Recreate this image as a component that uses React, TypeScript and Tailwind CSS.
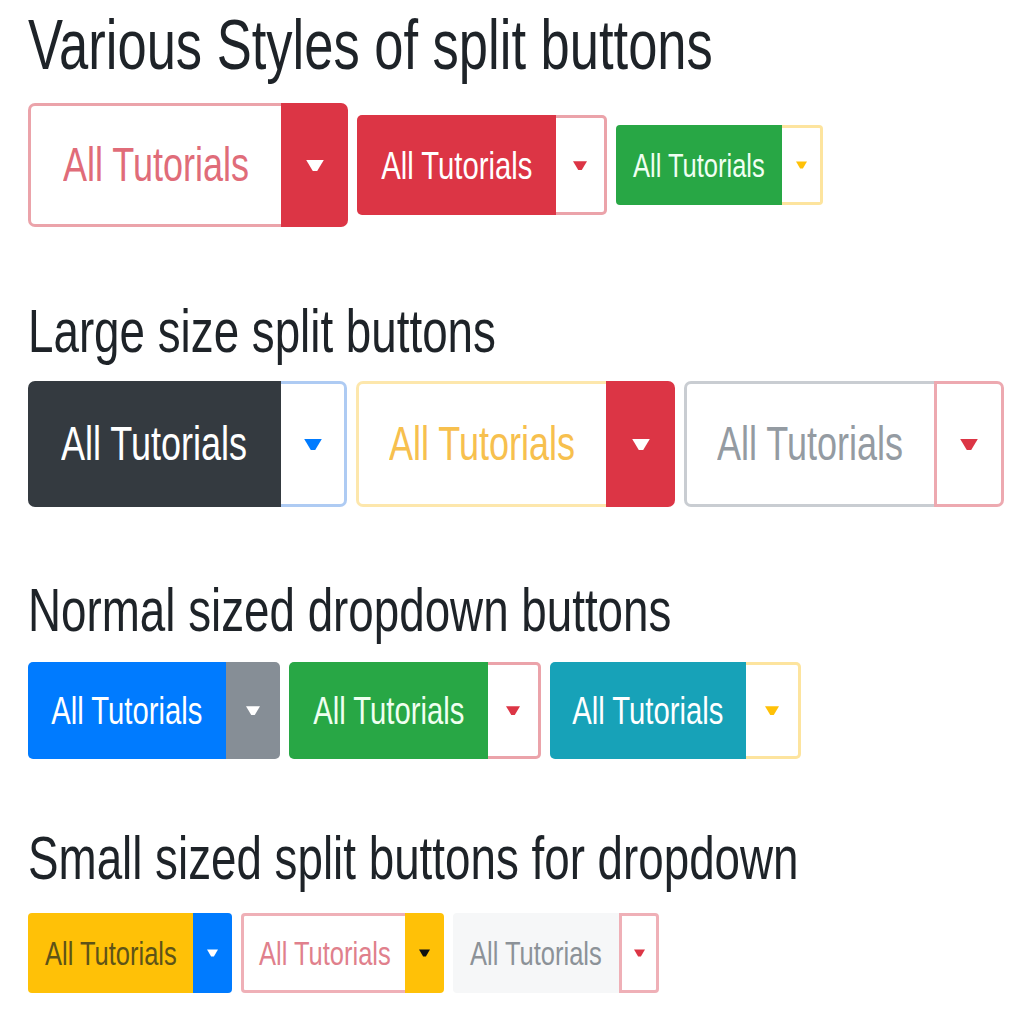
import React from 'react';

type SplitProps = {
  height: string;
  mainCls: string;
  toggleCls: string;
  textCls: string;
  caret: string;
  caretW: number;
  caretH: number;
};

const Caret = ({ color, w, h }: { color: string; w: number; h: number }) => (
  <svg width={w} height={h} viewBox="0 0 16 10">
    <polygon points="0,0 16,0 10,10 6,10" fill={color} />
  </svg>
);

const SplitButton = ({ height, mainCls, toggleCls, textCls, caret, caretW, caretH }: SplitProps) => (
  <div className={`flex ${height}`}>
    <button className={`flex items-center justify-center ${mainCls}`}>
      <span className={`scale-x-75 whitespace-nowrap leading-none ${textCls}`}>All Tutorials</span>
    </button>
    <button className={`flex items-center justify-center ${toggleCls}`}>
      <Caret color={caret} w={caretW} h={caretH} />
    </button>
  </div>
);

const Heading = ({ children, cls }: { children: React.ReactNode; cls: string }) => (
  <h2 className={`origin-left scale-x-75 whitespace-nowrap font-normal text-[#1e2328] ${cls}`}>{children}</h2>
);

export default function App() {
  return (
    <div className="min-h-screen bg-white pl-[28px] flex flex-col" style={{ fontFamily: '"Liberation Sans", Arial, sans-serif' }}>
      <Heading cls="mt-[10px] text-[70px] leading-[70px]">Various Styles of split buttons</Heading>

      {/* mixed sizes */}
      <div className="mt-[23px] flex items-center gap-[9px]">
        <SplitButton
          height="h-[124px]"
          mainCls="w-[253px] bg-white border-[3px] border-r-0 border-[#eba3aa] text-[#e06c79] rounded-l-[7px]"
          toggleCls="w-[67px] bg-[#dc3545] rounded-r-[7px]"
          textCls="text-[48px]"
          caret="#ffffff"
          caretW={18}
          caretH={11}
        />
        <SplitButton
          height="h-[100px]"
          mainCls="w-[199px] bg-[#dc3545] text-white rounded-l-[5px]"
          toggleCls="w-[51px] bg-white border-[3px] border-l-0 border-[#eba3aa] rounded-r-[5px]"
          textCls="text-[39px]"
          caret="#dc3545"
          caretW={14}
          caretH={9}
        />
        <SplitButton
          height="h-[80px]"
          mainCls="w-[166px] bg-[#28a745] text-[#f0fff2] rounded-l-[4px]"
          toggleCls="w-[41px] bg-white border-[3px] border-l-0 border-[#fde49e] rounded-r-[4px]"
          textCls="text-[34px]"
          caret="#ffc107"
          caretW={11}
          caretH={8}
        />
      </div>

      <Heading cls="mt-[74px] text-[61px] leading-[61px]">Large size split buttons</Heading>

      <div className="mt-[19px] flex items-center gap-[9px]">
        <SplitButton
          height="h-[126px]"
          mainCls="w-[253px] bg-[#343a40] text-white rounded-l-[7px]"
          toggleCls="w-[66px] bg-white border-[3px] border-l-0 border-[#aecbf3] rounded-r-[7px]"
          textCls="text-[48px]"
          caret="#007bff"
          caretW={18}
          caretH={11}
        />
        <SplitButton
          height="h-[126px]"
          mainCls="w-[250px] bg-white border-[3px] border-r-0 border-[#fde7ac] text-[#f7c04e] rounded-l-[7px]"
          toggleCls="w-[69px] bg-[#dc3545] rounded-r-[7px]"
          textCls="text-[48px]"
          caret="#ffffff"
          caretW={18}
          caretH={11}
        />
        <SplitButton
          height="h-[126px]"
          mainCls="w-[250px] bg-white border-[3px] border-r-0 border-[#c9cdd2] text-[#949ba2] rounded-l-[7px]"
          toggleCls="w-[70px] bg-white border-[3px] border-[#eda9b0] rounded-r-[7px]"
          textCls="text-[48px]"
          caret="#dc3545"
          caretW={18}
          caretH={11}
        />
      </div>

      <Heading cls="mt-[73px] text-[61px] leading-[61px]">Normal sized dropdown buttons</Heading>

      <div className="mt-[21px] flex items-center gap-[9px]">
        <SplitButton
          height="h-[97px]"
          mainCls="w-[198px] bg-[#007bff] text-white rounded-l-[5px]"
          toggleCls="w-[54px] bg-[#868e96] rounded-r-[5px]"
          textCls="text-[39px]"
          caret="#ffffff"
          caretW={14}
          caretH={9}
        />
        <SplitButton
          height="h-[97px]"
          mainCls="w-[199px] bg-[#28a745] text-[#effff0] rounded-l-[5px]"
          toggleCls="w-[53px] bg-white border-[3px] border-l-0 border-[#eba3aa] rounded-r-[5px]"
          textCls="text-[39px]"
          caret="#dc3545"
          caretW={14}
          caretH={9}
        />
        <SplitButton
          height="h-[97px]"
          mainCls="w-[196px] bg-[#17a2b8] text-white rounded-l-[5px]"
          toggleCls="w-[55px] bg-white border-[3px] border-l-0 border-[#fde49e] rounded-r-[5px]"
          textCls="text-[39px]"
          caret="#ffc107"
          caretW={14}
          caretH={9}
        />
      </div>

      <Heading cls="mt-[69px] text-[61px] leading-[61px]">Small sized split buttons for dropdown</Heading>

      <div className="mt-[24px] flex items-center gap-[9px]">
        <SplitButton
          height="h-[80px]"
          mainCls="w-[165px] bg-[#ffc107] text-[#5e5318] rounded-l-[4px]"
          toggleCls="w-[39px] bg-[#007bff] rounded-r-[4px]"
          textCls="text-[34px]"
          caret="#ffffff"
          caretW={11}
          caretH={8}
        />
        <SplitButton
          height="h-[80px]"
          mainCls="w-[164px] bg-white border-[3px] border-r-0 border-[#efb0b7] text-[#e0808c] rounded-l-[4px]"
          toggleCls="w-[39px] bg-[#ffc107] rounded-r-[4px]"
          textCls="text-[34px]"
          caret="#111111"
          caretW={11}
          caretH={8}
        />
        <SplitButton
          height="h-[80px]"
          mainCls="w-[166px] bg-[#f6f7f8] text-[#8c9298] rounded-l-[4px]"
          toggleCls="w-[40px] bg-white border-[3px] border-[#efb0b7] rounded-r-[4px]"
          textCls="text-[34px]"
          caret="#dc3545"
          caretW={11}
          caretH={8}
        />
      </div>
    </div>
  );
}
